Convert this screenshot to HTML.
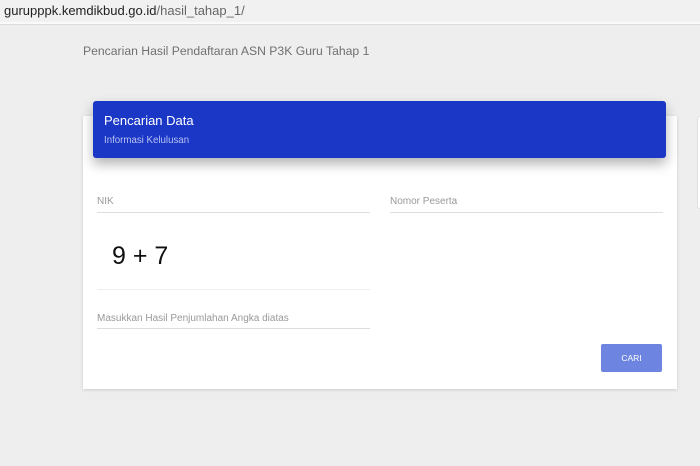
<!DOCTYPE html>
<html><head><style>
body{margin:0;width:700px;height:466px;background:#eeeeee;font-family:"Liberation Sans",sans-serif;position:relative;overflow:hidden}
.bar{position:absolute;left:0;top:0;width:700px;height:22px;background:#f1f1f1;border-bottom:2px solid #fafafa}
.url{position:absolute;left:4px;top:3px;font-size:13px;color:#222}
.url span{color:#666}
.line{position:absolute;left:0;top:24px;width:700px;height:1px;background:#dcdcdc}
.title{position:absolute;left:83px;top:44px;font-size:12.2px;color:#707070}
.card{position:absolute;left:83px;top:116px;width:594px;height:273px;background:#fff;box-shadow:0 1px 3px rgba(0,0,0,.15)}
.card2{position:absolute;left:697px;top:116px;width:20px;height:91px;background:#fff;border:1px solid #e0e0e0;border-radius:3px}
.head{position:absolute;left:93px;top:101px;width:573px;height:57px;background:#1b37c5;border-radius:3px;box-shadow:0 6px 12px rgba(0,0,0,.3)}
.h1{position:absolute;left:11px;top:12px;color:#fff;font-size:13px}
.h2{position:absolute;left:11px;top:34px;color:#b9c3f3;font-size:9.7px}
.lbl{position:absolute;font-size:10px;color:#999}
.ul{position:absolute;height:1px;background:#ddd}
.cap{position:absolute;left:112px;top:242px;font-size:25px;color:#111}
.btn{position:absolute;left:601px;top:344px;width:61px;height:28px;background:#6d84e0;border-radius:2px;color:#fff;font-size:8.5px;text-align:center;line-height:28px}
</style></head><body>
<div class="bar"><div class="url">gurupppk.kemdikbud.go.id<span>/hasil_tahap_1/</span></div></div>
<div class="line"></div>
<div class="title">Pencarian Hasil Pendaftaran ASN P3K Guru Tahap 1</div>
<div class="card2"></div>
<div class="card"></div>
<div class="head"><div class="h1">Pencarian Data</div><div class="h2">Informasi Kelulusan</div></div>
<div class="lbl" style="left:97px;top:196px">NIK</div>
<div class="ul" style="left:97px;top:212px;width:273px"></div>
<div class="lbl" style="left:390px;top:196px">Nomor Peserta</div>
<div class="ul" style="left:390px;top:212px;width:273px"></div>
<div class="cap">9 + 7</div>
<div class="ul" style="left:97px;top:289px;width:273px;background:#eee"></div>
<div class="lbl" style="left:97px;top:313px">Masukkan Hasil Penjumlahan Angka diatas</div>
<div class="ul" style="left:97px;top:328px;width:273px"></div>
<div class="btn">CARI</div>
</body></html>
